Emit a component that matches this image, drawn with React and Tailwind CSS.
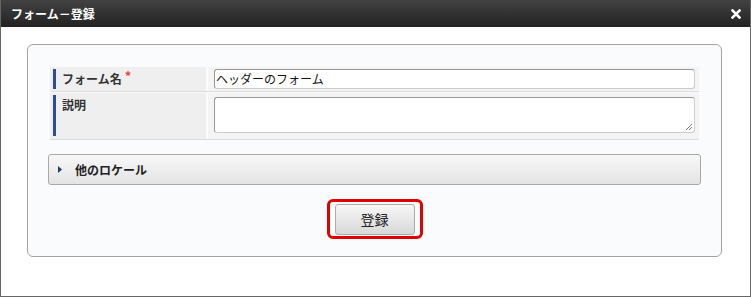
import React from "react";

export default function App() {
  const jp = { fontFamily: '"Noto Sans CJK JP", "Noto Sans", sans-serif' };
  return (
    <div className="w-[751px] h-[297px] bg-white flex flex-col border border-t-0 border-[#666]" style={jp}>
      <div className="h-[27px] shrink-0 bg-gradient-to-b from-[#424242] to-[#222222] flex items-center justify-between pl-[10px] pr-[8px] text-white">
        <span className="text-[12px] font-bold leading-none">フォーム－登録</span>
        <svg width="10" height="10" viewBox="0 0 10 10" className="mr-[1px]">
          <path d="M1.5 1.5 L8.5 8.5 M8.5 1.5 L1.5 8.5" stroke="white" strokeWidth="2.6" strokeLinecap="square" />
        </svg>
      </div>
      <div className="flex-1 pl-[26px] pr-[28px] pt-[17px]">
        <div className="h-[213px] border border-[#a3a3a3] rounded-[6px] bg-[#fafbfd] px-[20px] pt-[22px] flex flex-col">
          <div className="mx-[2px] flex flex-col">
            <div className="flex border-b border-[#dcdcdc] gap-[2px]">
              <div className="w-[156px] h-[24px] bg-[#efefef] flex items-center pl-[3px]">
                <div className="w-[3px] h-[20px] bg-[#2e4d8f]" />
                <span className="ml-[6px] text-[12px] font-bold text-[#333]">フォーム名</span>
                <span className="ml-[3px] text-[13px] font-bold text-[#e04848] self-start mt-[1px] leading-[16px]">*</span>
              </div>
              <div className="flex-1 bg-[#f4f4f4] flex items-center pl-[6px] pr-[4px]">
                <div className="w-full h-[20px] border border-[#999] border-b-[#ccc] border-r-[#ccc] rounded-[3px] bg-white flex items-center px-[1px] text-[12px] text-[#111]">
                  ヘッダーのフォーム
                </div>
              </div>
            </div>
            <div className="flex border-b border-[#dcdcdc] gap-[2px] mt-[1px]">
              <div className="w-[156px] h-[46px] bg-[#efefef] flex items-start pl-[3px] pt-[2px]">
                <div className="w-[3px] h-[41px] bg-[#2e4d8f]" />
                <span className="ml-[6px] mt-[4px] text-[12px] font-bold text-[#333] leading-none">説明</span>
              </div>
              <div className="flex-1 bg-[#f4f4f4] pl-[6px] pr-[4px] pt-[4px]">
                <div className="relative w-full h-[36px] border border-[#999] border-b-[#ccc] border-r-[#ccc] rounded-[3px] bg-white">
                  <svg width="8" height="8" viewBox="0 0 8 8" className="absolute right-[1px] bottom-[1px]">
                    <path d="M7 1 L1 7 M7 4 L4 7" stroke="#777" strokeWidth="1" />
                  </svg>
                </div>
              </div>
            </div>
          </div>
          <div className="mt-[14px] h-[31px] border border-[#a8a8a8] rounded-[3px] bg-gradient-to-b from-[#f8f8f8] to-[#e4e4e4] flex items-center pl-[9px]">
            <svg width="5" height="7" viewBox="0 0 5 7">
              <path d="M0 0 L4 3.5 L0 7 Z" fill="#1f3f6e" />
            </svg>
            <span className="ml-[12px] text-[12px] font-bold text-[#222]">他のロケール</span>
          </div>
          <div className="flex justify-center mt-[14px]">
            <div className="w-[96px] h-[40px] border-[3px] border-[#e00000] rounded-[6px] flex items-center justify-center">
              <div className="w-[80px] h-[31px] border border-[#aaa] rounded-[3px] bg-gradient-to-b from-[#f7f7f7] to-[#d8d8d8] flex items-center justify-center text-[14px] text-[#222]">
                登録
              </div>
            </div>
          </div>
        </div>
      </div>
    </div>
  );
}
